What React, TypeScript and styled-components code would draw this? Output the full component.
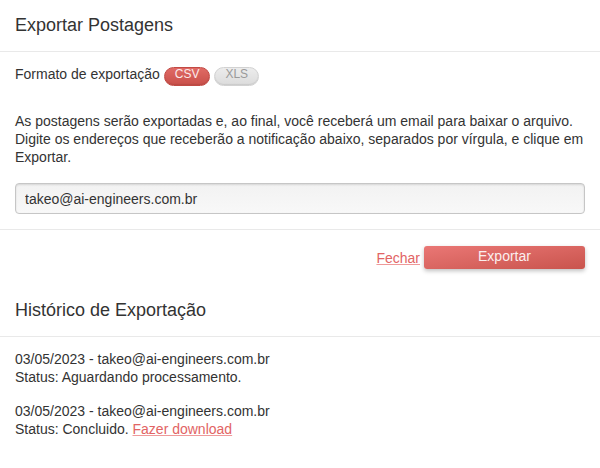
import React, { useState } from 'react';
import styled, { createGlobalStyle } from 'styled-components';

const GlobalStyle = createGlobalStyle`
  html, body {
    margin: 0;
    padding: 0;
    background: #fff;
  }
  body {
    font-family: "Liberation Sans", Arial, sans-serif;
    font-size: 14px;
    line-height: 18px;
    color: #333;
  }
`;

const Modal = styled.div`
  width: 600px;
  background: #fff;
`;

const Header = styled.div`
  padding: 10px 15px 11px;
  border-bottom: 1px solid #e9e9e9;
`;

const Title = styled.h3`
  margin: 0;
  font-size: 18px;
  font-weight: normal;
  line-height: 30px;
  color: #333;
`;

const Body = styled.div<{ $top?: number }>`
  padding: ${(p) => p.$top ?? 15}px 15px 15px;
`;

const FormatRow = styled.div`
  display: flex;
  align-items: flex-start;
  gap: 4px;
  height: 19px;
  margin-bottom: 26px;
`;

const Label = styled.span`
  line-height: 13px;
  margin-top: 1px;
`;

const Pill = styled.button<{ $active?: boolean }>`
  height: 19px;
  padding: 0 10px;
  border-radius: 10px;
  font-family: inherit;
  font-size: 12px;
  line-height: 13px;
  cursor: pointer;
  box-sizing: border-box;
  border: 1px solid ${(p) => (p.$active ? '#c24a44' : '#d2d2d2')};
  color: ${(p) => (p.$active ? '#fbeaea' : '#9a9a9a')};
  background: ${(p) =>
    p.$active
      ? 'linear-gradient(to bottom, #e06a65, #c9504a)'
      : 'linear-gradient(to bottom, #ececec, #dcdcdc)'};
  box-shadow: inset 0 -1px 1px rgba(0, 0, 0, 0.08);
  display: flex;
  align-items: flex-start;
`;

const Paragraph = styled.p`
  margin: 0 0 17px;
  line-height: 18px;
`;

const EmailInput = styled.input`
  display: block;
  width: 100%;
  box-sizing: border-box;
  height: 31px;
  padding: 0 9px;
  border: 1px solid #c6c6c6;
  border-radius: 4px;
  background: linear-gradient(to bottom, #f2f2f2, #f8f8f8);
  box-shadow: inset 0 1px 2px rgba(0, 0, 0, 0.12);
  font-family: inherit;
  font-size: 14px;
  color: #333;
  outline: none;
`;

const Footer = styled.div`
  border-top: 1px solid #e9e9e9;
  padding: 16px 15px 16px;
  display: flex;
  justify-content: flex-end;
  align-items: center;
  gap: 4px;
`;

const Link = styled.a`
  color: #e26464;
  text-decoration: underline;
  text-decoration-color: #ee9a9a;
  cursor: pointer;
`;

const PrimaryButton = styled.button`
  width: 161px;
  height: 23px;
  border: none;
  border-radius: 3px;
  background: linear-gradient(to bottom right, #ea7775, #c9544d);
  color: #fbeeee;
  font-family: inherit;
  font-size: 14px;
  line-height: 18px;
  padding: 0 0 3px;
  box-shadow: 0 2px 4px rgba(0, 0, 0, 0.25);
  cursor: pointer;
`;

const Entry = styled.p`
  margin: 0 0 16px;
  line-height: 18px;
`;

export default function App() {
  const [format, setFormat] = useState<'CSV' | 'XLS'>('CSV');
  const [email, setEmail] = useState('takeo@ai-engineers.com.br');

  return (
    <Modal>
      <GlobalStyle />
      <Header>
        <Title>Exportar Postagens</Title>
      </Header>
      <Body>
        <FormatRow>
          <Label>Formato de exportação</Label>
          <Pill $active={format === 'CSV'} onClick={() => setFormat('CSV')}>CSV</Pill>
          <Pill $active={format === 'XLS'} onClick={() => setFormat('XLS')}>XLS</Pill>
        </FormatRow>
        <Paragraph>
          As postagens serão exportadas e, ao final, você receberá um email para baixar o arquivo.
          Digite os endereços que receberão a notificação abaixo, separados por vírgula, e clique em
          Exportar.
        </Paragraph>
        <EmailInput value={email} onChange={(e) => setEmail(e.target.value)} />
      </Body>
      <Footer>
        <Link>Fechar</Link>
        <PrimaryButton>Exportar</PrimaryButton>
      </Footer>
      <Header>
        <Title>Histórico de Exportação</Title>
      </Header>
      <Body $top={13}>
        <Entry>
          03/05/2023 - takeo@ai-engineers.com.br
          <br />
          Status: Aguardando processamento.
        </Entry>
        <Entry>
          03/05/2023 - takeo@ai-engineers.com.br
          <br />
          Status: Concluido. <Link>Fazer download</Link>
        </Entry>
      </Body>
    </Modal>
  );
}
